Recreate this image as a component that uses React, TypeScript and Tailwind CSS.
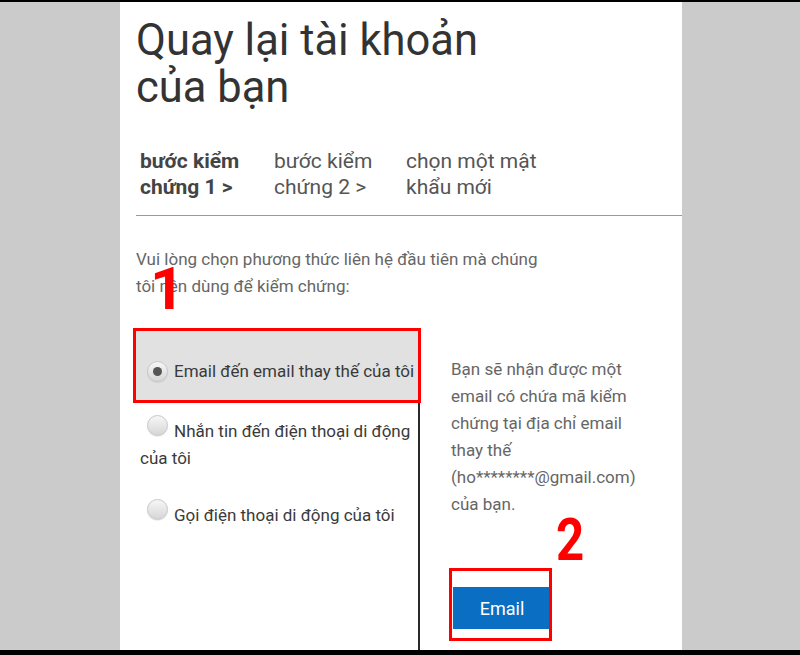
import React from "react";

function Radio({ checked }: { checked?: boolean }) {
  return (
    <span className="inline-flex items-center justify-center size-[21px] rounded-full border border-[#c6c6c6] bg-linear-to-b from-[#f7f7f7] to-[#d6d6d6] align-[1px] ml-[7px] mr-[6px] shadow-[0_1px_1px_rgba(0,0,0,0.08)]">
      {checked && <span className="size-[9px] rounded-full bg-[#555]" />}
    </span>
  );
}

const steps = [
  { label: "bước kiểm chứng 1 >", active: true, width: "w-[134px]" },
  { label: "bước kiểm chứng 2 >", active: false, width: "w-[132px]" },
  { label: "chọn một mật khẩu mới", active: false, width: "w-[140px]" },
];

export default function App() {
  return (
    <div className="w-[800px] h-[655px] bg-black pt-[2px] pb-[5px] font-['Roboto',sans-serif]">
      <div className="h-full bg-[#cbcbcb]">
        <div className="relative ml-[120px] w-[562px] h-full bg-white overflow-hidden">
          <div className="pl-[16px] pt-[15px]">
            <h1 className="text-[43.5px] leading-[47px] text-[#333] font-normal">
              Quay lại tài khoản
              <br />
              của bạn
            </h1>

            <div className="flex mt-[37px] ml-[4px]">
              {steps.map((s, i) => (
                <div
                  key={i}
                  className={`${s.width} text-[21px] leading-[26px] ${
                    s.active ? "font-bold text-[#444]" : "text-[#555]"
                  }`}
                >
                  {s.label}
                </div>
              ))}
            </div>
          </div>

          <div className="ml-[16px] mt-[15px] h-px bg-[#999]" />

          <div className="pl-[16px]">
            <p className="mt-[30px] w-[420px] text-[17px] leading-[27px] text-[#666]">
              Vui lòng chọn phương thức liên hệ đầu tiên mà chúng tôi nên dùng để kiểm chứng:
            </p>

            <div className="flex mt-[31px] h-[319px]">
              <div className="w-[284px] border-r-2 border-[#2a2a2a] text-[17px] leading-[27px] text-[#3a3a3a]">
                <div className="bg-[#e1e1e1] h-[69px] pt-[27px] pl-[4px] whitespace-nowrap">
                  <Radio checked />
                  Email đến email thay thế của tôi
                </div>
                <div className="mt-[15px] pl-[4px] pr-[6px]">
                  <Radio />
                  Nhắn tin đến điện thoại di động của tôi
                </div>
                <div className="mt-[27px] pl-[4px]">
                  <Radio />
                  Gọi điện thoại di động của tôi
                </div>
              </div>

              <div className="flex-1 pl-[31px] pt-[25px]">
                <p className="w-[200px] text-[17px] leading-[27px] text-[#666]">
                  Bạn sẽ nhận được một email có chứa mã kiểm chứng tại địa chỉ email thay thế (ho********@gmail.com) của bạn.
                </p>
                <button className="mt-[69px] ml-[2px] w-[98px] h-[42px] bg-[#0a6fc3] text-white text-[18px]">
                  Email
                </button>
              </div>
            </div>
          </div>

          {/* annotations */}
          <div className="absolute left-[13px] top-[326px] w-[288px] h-[75px] border-[3px] border-[#ff0000]" />
          <div className="absolute left-[329px] top-[566px] w-[103px] h-[73px] border-[3px] border-[#ff0000]" />
          <span className="absolute left-[30px] top-[257px] text-[60px] leading-none font-bold text-[#ff0000]">
            1
          </span>
          <span className="absolute left-[436px] top-[508px] origin-left scale-x-[0.82] text-[60px] leading-none font-bold text-[#ff0000]">
            2
          </span>
        </div>
      </div>
    </div>
  );
}
